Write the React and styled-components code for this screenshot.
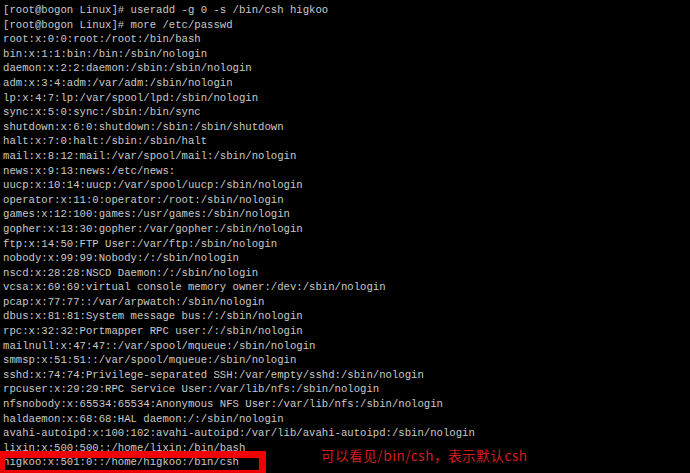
import React from "react";
import styled, { createGlobalStyle } from "styled-components";

const GlobalStyle = createGlobalStyle`
  html, body {
    margin: 0;
    padding: 0;
    background: #000;
  }
`;

const Screen = styled.div`
  width: 690px;
  height: 473px;
  overflow: hidden;
  background: #000;
  padding: 3px 0 0 3px;
  box-sizing: border-box;
  display: flex;
  flex-direction: column;
  font-family: "Liberation Mono", "Courier New", monospace;
  font-size: 10.63px;
  line-height: 14.6px;
  color: #c8c8c8;
`;

const Line = styled.div`
  white-space: pre;
`;

const LastRow = styled.div`
  position: relative;
  display: flex;
  align-items: center;
  height: 14.6px;
`;

const HighlightBox = styled.div`
  position: absolute;
  left: -3px;
  top: -4px;
  width: 266px;
  height: 26px;
  box-sizing: border-box;
  border: 7px solid #f00000;
  border-left-width: 5px;
`;

const Note = styled.span`
  margin-left: 82px;
  font-family: "Noto Sans CJK SC", sans-serif;
  font-size: 13.5px;
  letter-spacing: 0.6px;
  color: #d41c1c;
  white-space: pre;
  position: relative;
  top: -7px;
`;

const lines = [
  "[root@bogon Linux]# useradd -g 0 -s /bin/csh higkoo",
  "[root@bogon Linux]# more /etc/passwd",
  "root:x:0:0:root:/root:/bin/bash",
  "bin:x:1:1:bin:/bin:/sbin/nologin",
  "daemon:x:2:2:daemon:/sbin:/sbin/nologin",
  "adm:x:3:4:adm:/var/adm:/sbin/nologin",
  "lp:x:4:7:lp:/var/spool/lpd:/sbin/nologin",
  "sync:x:5:0:sync:/sbin:/bin/sync",
  "shutdown:x:6:0:shutdown:/sbin:/sbin/shutdown",
  "halt:x:7:0:halt:/sbin:/sbin/halt",
  "mail:x:8:12:mail:/var/spool/mail:/sbin/nologin",
  "news:x:9:13:news:/etc/news:",
  "uucp:x:10:14:uucp:/var/spool/uucp:/sbin/nologin",
  "operator:x:11:0:operator:/root:/sbin/nologin",
  "games:x:12:100:games:/usr/games:/sbin/nologin",
  "gopher:x:13:30:gopher:/var/gopher:/sbin/nologin",
  "ftp:x:14:50:FTP User:/var/ftp:/sbin/nologin",
  "nobody:x:99:99:Nobody:/:/sbin/nologin",
  "nscd:x:28:28:NSCD Daemon:/:/sbin/nologin",
  "vcsa:x:69:69:virtual console memory owner:/dev:/sbin/nologin",
  "pcap:x:77:77::/var/arpwatch:/sbin/nologin",
  "dbus:x:81:81:System message bus:/:/sbin/nologin",
  "rpc:x:32:32:Portmapper RPC user:/:/sbin/nologin",
  "mailnull:x:47:47::/var/spool/mqueue:/sbin/nologin",
  "smmsp:x:51:51::/var/spool/mqueue:/sbin/nologin",
  "sshd:x:74:74:Privilege-separated SSH:/var/empty/sshd:/sbin/nologin",
  "rpcuser:x:29:29:RPC Service User:/var/lib/nfs:/sbin/nologin",
  "nfsnobody:x:65534:65534:Anonymous NFS User:/var/lib/nfs:/sbin/nologin",
  "haldaemon:x:68:68:HAL daemon:/:/sbin/nologin",
  "avahi-autoipd:x:100:102:avahi-autoipd:/var/lib/avahi-autoipd:/sbin/nologin",
  "lixin:x:500:500::/home/lixin:/bin/bash",
];

export default function App() {
  return (
    <>
      <GlobalStyle />
      <Screen>
        {lines.map((text, i) => (
          <Line key={i}>{text}</Line>
        ))}
        <LastRow>
          <Line>higkoo:x:501:0::/home/higkoo:/bin/csh</Line>
          <Note>可以看见/bin/csh，表示默认csh</Note>
          <HighlightBox />
        </LastRow>
      </Screen>
    </>
  );
}
